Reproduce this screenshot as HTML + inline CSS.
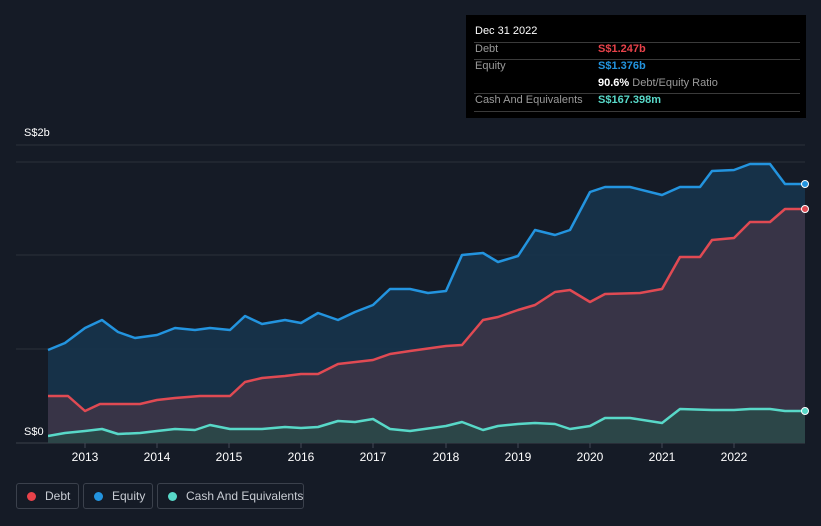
<!DOCTYPE html><html><head><style>
body{margin:0;width:821px;height:526px;background:#151b26;font-family:"Liberation Sans",sans-serif;overflow:hidden;position:relative}
.tt{position:absolute;left:466px;top:15px;width:340px;height:103px;background:#000;color:#fff;font-size:11px}
.tt .r{position:absolute;left:8px;right:6px;border-top:1px solid #3a3a3a}
.lg{position:absolute;top:483px;height:26px;border:1px solid #3b414c;border-radius:3px;color:#c8ccd3;font-size:12px;line-height:24px;box-sizing:border-box;padding-left:28px;white-space:nowrap}
.lg i{position:absolute;left:10px;top:8px;width:9px;height:9px;border-radius:50%}
</style></head><body>
<svg width="821" height="526" style="position:absolute;left:0;top:0">
<g stroke="#2a303b" stroke-width="1">
<line x1="16" y1="145" x2="805" y2="145"/><line x1="16" y1="162" x2="805" y2="162"/><line x1="16" y1="255" x2="805" y2="255"/><line x1="16" y1="349" x2="805" y2="349"/><line x1="16" y1="443" x2="805" y2="443" stroke="#3a404b"/></g>
<polygon fill="#16344c" opacity="0.9" points="48,443 48,350 65,343 85,328 102,320 118,332 135,338 157,335 175,328 195,330 210,328 230,330 245,316 262,324 285,320 301,323 318,313 338,320 355,312 373,305 390,289 410,289 428,293 446,291 462,255 483,253 498,262 518,256 535,230 555,235 570,230 590,192 605,187 630,187 662,195 680,187 700,187 712,171 734,170 750,164 770,164 785,184 805,184 805,443"/>
<polygon fill="#383447" points="48,443 48,396 68,396 85,411 100,404 140,404 157,400 175,398 200,396 230,396 245,382 262,378 285,376 301,374 318,374 338,364 373,360 390,354 410,351 446,346 462,345 483,320 498,317 518,310 535,305 555,292 570,290 590,302 605,294 640,293 662,289 680,257 700,257 712,240 734,238 750,222 770,222 785,209 805,209 805,443"/>
<polygon fill="#2c4648" points="48,443 48,436 65,433 85,431 102,429 118,434 140,433 157,431 175,429 195,430 210,425 230,429 262,429 285,427 301,428 318,427 338,421 355,422 373,419 390,429 410,431 446,426 462,422 483,430 498,426 518,424 535,423 555,424 570,429 590,426 605,418 630,418 662,423 680,409 712,410 734,410 750,409 770,409 785,411 805,411 805,443"/>
<g fill="none" stroke-width="2.5" stroke-linejoin="round">
<polyline stroke="#2394df" points="48,350 65,343 85,328 102,320 118,332 135,338 157,335 175,328 195,330 210,328 230,330 245,316 262,324 285,320 301,323 318,313 338,320 355,312 373,305 390,289 410,289 428,293 446,291 462,255 483,253 498,262 518,256 535,230 555,235 570,230 590,192 605,187 630,187 662,195 680,187 700,187 712,171 734,170 750,164 770,164 785,184 805,184"/>
<polyline stroke="#e04a53" points="48,396 68,396 85,411 100,404 140,404 157,400 175,398 200,396 230,396 245,382 262,378 285,376 301,374 318,374 338,364 373,360 390,354 410,351 446,346 462,345 483,320 498,317 518,310 535,305 555,292 570,290 590,302 605,294 640,293 662,289 680,257 700,257 712,240 734,238 750,222 770,222 785,209 805,209"/>
<polyline stroke="#58d8c8" points="48,436 65,433 85,431 102,429 118,434 140,433 157,431 175,429 195,430 210,425 230,429 262,429 285,427 301,428 318,427 338,421 355,422 373,419 390,429 410,431 446,426 462,422 483,430 498,426 518,424 535,423 555,424 570,429 590,426 605,418 630,418 662,423 680,409 712,410 734,410 750,409 770,409 785,411 805,411"/>
</g>
<circle cx="805" cy="184" r="3.5" fill="#2394df" stroke="#fff" stroke-width="1"/>
<circle cx="805" cy="209" r="3.5" fill="#e04a53" stroke="#fff" stroke-width="1"/>
<circle cx="805" cy="411" r="3.5" fill="#58d8c8" stroke="#fff" stroke-width="1"/>
<rect x="16" y="422" width="32" height="20" fill="#151b26"/>
<g fill="#fff" font-size="11" font-family="Liberation Sans,sans-serif">
<text x="24" y="136">S$2b</text><text x="24" y="435">S$0</text>
<g text-anchor="middle" font-size="12"><text x="85" y="461">2013</text><text x="157" y="461">2014</text><text x="229" y="461">2015</text><text x="301" y="461">2016</text><text x="373" y="461">2017</text><text x="446" y="461">2018</text><text x="518" y="461">2019</text><text x="590" y="461">2020</text><text x="662" y="461">2021</text><text x="734" y="461">2022</text></g></g>
<g stroke="#444a55"><line x1="85" y1="443" x2="85" y2="448"/><line x1="157" y1="443" x2="157" y2="448"/><line x1="229" y1="443" x2="229" y2="448"/><line x1="301" y1="443" x2="301" y2="448"/><line x1="373" y1="443" x2="373" y2="448"/><line x1="446" y1="443" x2="446" y2="448"/><line x1="518" y1="443" x2="518" y2="448"/><line x1="590" y1="443" x2="590" y2="448"/><line x1="662" y1="443" x2="662" y2="448"/><line x1="734" y1="443" x2="734" y2="448"/></g>
</svg>
<div class="tt">
<div style="position:absolute;left:9px;top:10px">Dec 31 2022</div>
<div class="r" style="top:27px"></div>
<div style="position:absolute;left:9px;top:28px;color:#9a9a9a">Debt</div><div style="position:absolute;left:132px;top:28px;color:#e8424a;font-weight:bold">S$1.247b</div>
<div class="r" style="top:44px"></div>
<div style="position:absolute;left:9px;top:45px;color:#9a9a9a">Equity</div><div style="position:absolute;left:132px;top:45px;color:#2394df;font-weight:bold">S$1.376b</div>
<div style="position:absolute;left:132px;top:62px;color:#9a9a9a"><b style="color:#fff">90.6%</b> Debt/Equity Ratio</div>
<div class="r" style="top:78px"></div>
<div style="position:absolute;left:9px;top:79px;color:#9a9a9a">Cash And Equivalents</div><div style="position:absolute;left:132px;top:79px;color:#58d8c8;font-weight:bold">S$167.398m</div>
<div class="r" style="top:96px"></div>
</div>
<div class="lg" style="left:16px;width:63px"><i style="background:#e8424a"></i>Debt</div>
<div class="lg" style="left:83px;width:70px"><i style="background:#2394df"></i>Equity</div>
<div class="lg" style="left:157px;width:147px"><i style="background:#58d8c8"></i>Cash And Equivalents</div>
</body></html>
